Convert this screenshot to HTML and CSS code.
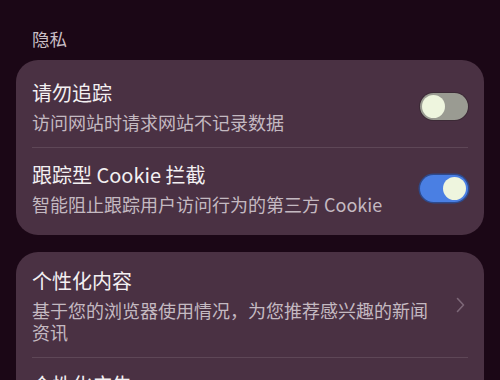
FILE: index.html
```html
<!DOCTYPE html>
<html lang="zh-CN">
<head>
<meta charset="utf-8">
<link rel="stylesheet" href="styles.css">
</head>
<body>
<div class="page">
  <div class="section-title">隐私</div>
  <div class="card card-first">
    <div class="row">
      <div class="text">
        <div class="title">请勿追踪</div>
        <div class="sub">访问网站时请求网站不记录数据</div>
      </div>
      <div class="toggle"><span class="knob"></span></div>
    </div>
    <div class="divider"></div>
    <div class="row">
      <div class="text">
        <div class="title">跟踪型 Cookie 拦截</div>
        <div class="sub">智能阻止跟踪用户访问行为的第三方 Cookie</div>
      </div>
      <div class="toggle on"><span class="knob"></span></div>
    </div>
  </div>
  <div class="card card-second">
    <div class="row">
      <div class="text">
        <div class="title">个性化内容</div>
        <div class="sub">基于您的浏览器使用情况，为您推荐感兴趣的新闻资讯</div>
      </div>
      <svg class="chevron" width="9" height="16" viewBox="0 0 9 16"><path d="M1.5 1.5 L7.5 8 L1.5 14.5" fill="none" stroke="#7c6777" stroke-width="1.6" stroke-linecap="round" stroke-linejoin="round"/></svg>
    </div>
    <div class="divider"></div>
    <div class="row">
      <div class="text">
        <div class="title">个性化广告</div>
      </div>
    </div>
  </div>
</div>
</body>
</html>
```

FILE: styles.css
```css
html, body {
  margin: 0;
  padding: 0;
  background: #1b0716;
  height: 380px;
  overflow: hidden;
}
body {
  font-family: "Noto Sans CJK SC", "Noto Sans", sans-serif;
  color: #f1eef0;
}
.page {
  padding: 0 16px;
}
.section-title {
  padding: 27px 16px 0;
  font-size: 17.5px;
  line-height: 24px;
  color: #c8bec5;
  margin-bottom: 9px;
}
.card {
  background: #4a3143;
  border-radius: 22px;
  padding: 6px 16px 6px;
}
.card-second {
  margin-top: 17px;
  padding-top: 2px;
}
.row {
  display: flex;
  align-items: center;
  gap: 20px;
  padding: 13px 0 14px;
}
.text {
  flex: 1;
  min-width: 0;
}
.title {
  font-size: 20px;
  line-height: 28px;
  color: #f3f0f2;
}
.sub {
  margin-top: 4px;
  font-size: 18px;
  line-height: 22px;
  color: #c4b9c1;
}
.divider {
  height: 1px;
  background: #5e4757;
}
.toggle {
  flex: none;
  width: 48px;
  height: 27px;
  border-radius: 14px;
  background: #9a9b92;
  box-shadow: 0 0 0 1px #3c2a36;
  display: flex;
  align-items: center;
  padding: 0 2px;
  box-sizing: border-box;
}
.toggle .knob {
  width: 23px;
  height: 23px;
  border-radius: 50%;
  background: #eef5de;
}
.toggle.on {
  background: #4a7fe3;
  box-shadow: 0 0 0 1.5px #2e4a8c;
  justify-content: flex-end;
}
.chevron {
  flex: none;
  margin-right: 3px;
}
```
